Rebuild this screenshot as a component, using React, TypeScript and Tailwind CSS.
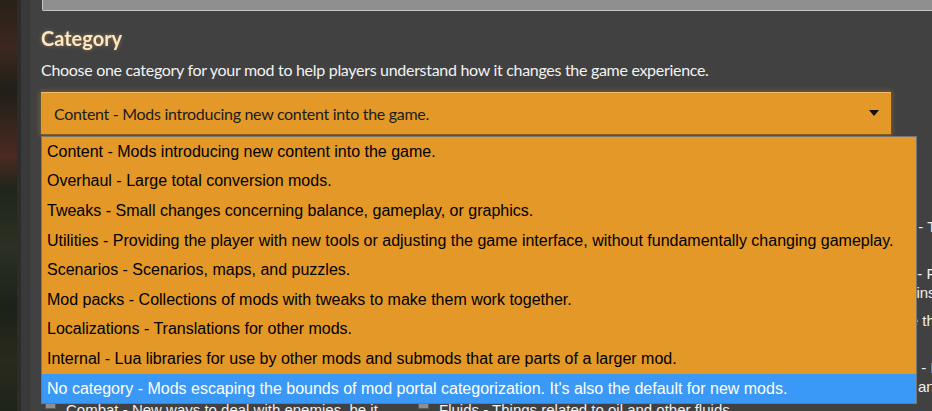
import React from 'react';

const OPTIONS = [
  'Content - Mods introducing new content into the game.',
  'Overhaul - Large total conversion mods.',
  'Tweaks - Small changes concerning balance, gameplay, or graphics.',
  'Utilities - Providing the player with new tools or adjusting the game interface, without fundamentally changing gameplay.',
  'Scenarios - Scenarios, maps, and puzzles.',
  'Mod packs - Collections of mods with tweaks to make them work together.',
  'Localizations - Translations for other mods.',
  'Internal - Lua libraries for use by other mods and submods that are parts of a larger mod.',
  "No category - Mods escaping the bounds of mod portal categorization. It's also the default for new mods.",
];

// tag checkboxes that sit behind the open list
const TAG_COLUMNS: [string, string][][] = [
  [
    ['Logistics', 'Transport of items between machines and storage containers.'],
    ['Trains', 'Trains are great, but what if they could do even more?'],
    ['Armor', 'Armors or armor equipment related, shields and exoskeletons.'],
    ['Character', "Changes to the player's in-game character and its abilities."],
    ['Combat', 'New ways to deal with enemies, be it attack or defense.'],
  ],
  [
    ['Enemies', 'Changes to enemies or entirely new enemies to deal with.'],
    ['Environment', 'Map generation and terrain modification of the world.'],
    ['Mining', 'New ores and resources as well as machines to mine them.'],
    ['Logistic network', 'Related to roboports and logistic robots.'],
    ['Fluids', 'Things related to oil and other fluids.'],
  ],
  [
    ['Transportation', 'Transportation of the player.'],
    ['Manufacturing', 'Furnaces, assembling machines, production chains and the recipes for them.'],
    ['Storage', 'More than just chests, boxes and warehouses.'],
    ['Circuit network', 'Entities which interact with the circuit network and change the way it works.'],
  ],
];

const TagBox = ({ name, text }: { name: string; text: string }) => (
  <label className="h-[38px] flex items-start gap-[10px] overflow-hidden">
    <span className="mt-[-2px] w-[11px] h-[11px] shrink-0 bg-[#8e8e8e] border border-[#5c5c5c]" />
    <span className="text-[15px] leading-[19px] text-[#f0f0f0]">
      {name} - {text}
    </span>
  </label>
);

export default function App() {
  return (
    <div className="relative w-[932px] h-[411px] overflow-hidden flex bg-[#414141] font-['Liberation_Sans',Arial,sans-serif]">
      <div className="w-[17px] shrink-0 bg-[linear-gradient(180deg,#2a2118_0%,#3b2720_12%,#201f18_22%,#4a2a22_38%,#1f2619_46%,#2c3024_60%,#1b2217_75%,#2a2a1e_88%,#1d2418_100%)]" />
      <div className="w-[4px] shrink-0 bg-[#2c2c2c]" />
      <div className="w-[9px] shrink-0 bg-[#393939]" />

      <main className="flex-1 pl-[11px] font-['Lato','Open_Sans',sans-serif]">
        <div className="ml-[1px] h-[11px] bg-[#8f8f8f] border-b border-l border-[#c4c4c4] rounded-bl-[2px]" />

        <h2 className="mt-[15px] text-[20px] leading-[24px] font-bold text-[#ffe6c0] drop-shadow-[0_0_2px_rgba(255,200,120,0.35)]">
          Category
        </h2>
        <p className="mt-[9px] text-[16px] tracking-[-0.3px] leading-[22px] text-[#f2f2f2]">
          Choose one category for your mod to help players understand how it changes the game experience.
        </p>

        <div className="mt-[11px] w-[850px] h-[43px] flex items-center justify-between pl-[13px] pr-[12px] bg-[#e39828] border-t border-t-[#f2bb6a] border-b border-b-[#8a5c1a] shadow-[0_0_5px_1px_rgba(227,152,40,0.35)] text-[16px] tracking-[-0.3px] text-[#1c1c1c]">
          <span>Content - Mods introducing new content into the game.</span>
          <svg width="10" height="6" viewBox="0 0 10 6" className="mb-[2px]">
            <path d="M0 0H10L5 6Z" fill="#111" />
          </svg>
        </div>

        <section className="mt-[20px]">
          <h2 className="text-[20px] leading-[24px] font-bold text-[#ffe6c0]">Tags</h2>
          <p className="mt-[8px] text-[16px] tracking-[-0.3px] leading-[22px] text-[#f2f2f2]">
            Choose up to six tags that describe what your mod does.
          </p>
          <div className="mt-[3px] ml-[4px] grid grid-cols-[373px_379px_373px] font-['Liberation_Sans',Arial,sans-serif]">
            {TAG_COLUMNS.map((col, i) => (
              <div key={i} className={i === 2 ? 'flex flex-col gap-[9px] pt-[5px]' : 'flex flex-col gap-[9px]'}>
                {col.map(([n, t]) => (
                  <TagBox key={n} name={n} text={t} />
                ))}
              </div>
            ))}
          </div>
        </section>
      </main>

      <ul className="absolute left-[41px] top-[136px] w-[876px] bg-[#e39828] border border-[#767676] text-[16px] text-black font-['Liberation_Sans',Arial,sans-serif]">
        {OPTIONS.map((o, i) => (
          <li
            key={o}
            className={
              i === OPTIONS.length - 1
                ? 'h-[29.6px] flex items-center px-[5px] bg-[#3a98f6] text-white'
                : 'h-[29.6px] flex items-center px-[5px]'
            }
          >
            {o}
          </li>
        ))}
      </ul>
    </div>
  );
}
